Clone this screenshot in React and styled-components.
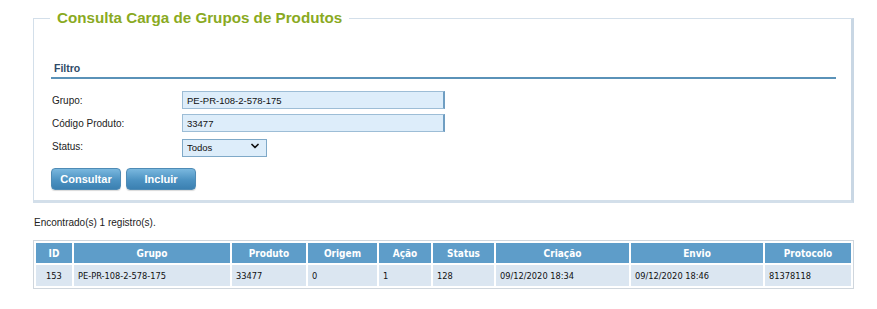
import React from "react";
import styled, { createGlobalStyle } from "styled-components";
import { ChevronDown } from "lucide-react";

const GlobalStyle = createGlobalStyle`
  body {
    margin: 0;
    background: #ffffff;
    font-family: "Liberation Sans", Arial, sans-serif;
    color: #222;
  }
`;

const rows = [
  {
    id: "153",
    grupo: "PE-PR-108-2-578-175",
    produto: "33477",
    origem: "0",
    acao: "1",
    status: "128",
    criacao: "09/12/2020 18:34",
    envio: "09/12/2020 18:46",
    protocolo: "81378118",
  },
];

const columns = [
  { key: "id", title: "ID", width: 36, center: true },
  { key: "grupo", title: "Grupo", width: 156 },
  { key: "produto", title: "Produto", width: 74 },
  { key: "origem", title: "Origem", width: 69 },
  { key: "acao", title: "Ação", width: 52 },
  { key: "status", title: "Status", width: 61 },
  { key: "criacao", title: "Criação", width: 133 },
  { key: "envio", title: "Envio", width: 132 },
  { key: "protocolo", title: "Protocolo" },
];

export default function App() {
  return (
    <>
      <GlobalStyle />
      <Page>
        <Panel>
          <Title>Consulta Carga de Grupos de Produtos</Title>
          <SectionHeader>Filtro</SectionHeader>
          <Form>
            <Label>Grupo:</Label>
            <TextInput defaultValue="PE-PR-108-2-578-175" />
            <Label>Código Produto:</Label>
            <TextInput defaultValue="33477" />
            <Label>Status:</Label>
            <SelectWrap>
              <Select defaultValue="Todos">
                <option>Todos</option>
              </Select>
              <Chevron size={12} strokeWidth={3.5} />
            </SelectWrap>
          </Form>
          <Buttons>
            <Button>Consultar</Button>
            <Button>Incluir</Button>
          </Buttons>
        </Panel>

        <Found>Encontrado(s) 1 registro(s).</Found>

        <Table>
          <colgroup>
            {columns.map((c) => (
              <col key={c.key} style={c.width ? { width: c.width } : undefined} />
            ))}
          </colgroup>
          <thead>
            <tr>
              {columns.map((c) => (
                <Th key={c.key}>{c.title}</Th>
              ))}
            </tr>
          </thead>
          <tbody>
            {rows.map((r) => (
              <tr key={r.id}>
                {columns.map((c) => (
                  <Td key={c.key} $center={c.center}>
                    {r[c.key]}
                  </Td>
                ))}
              </tr>
            ))}
          </tbody>
        </Table>
      </Page>
    </>
  );
}

const Page = styled.div`
  width: 821px;
  padding: 9px 0 20px 33px;
`;

const Panel = styled.fieldset`
  margin: 0;
  padding: 0 15px 10px 17px;
  border: 1px solid #d3dfea;
  border-right: 3px solid #c9d7e4;
  border-bottom: 3px solid #d3dfea;
  background: #ffffff;
  min-width: 0;
`;

const Title = styled.legend`
  margin-left: -1px;
  padding: 0 7px;
  font-size: 15.2px;
  line-height: 18px;
  font-weight: bold;
  color: #8aaa1f;
`;

const SectionHeader = styled.div`
  margin-top: 35px;
  padding: 0 0 2px 3px;
  font-size: 10.5px;
  line-height: 13px;
  font-weight: bold;
  color: #2f4b68;
  border-bottom: 2px solid #5a92b8;
`;

const Form = styled.div`
  display: grid;
  grid-template-columns: 131px 263px;
  grid-auto-rows: 18px;
  row-gap: 5px;
  margin-top: 12px;
  align-items: center;
`;

const Label = styled.label`
  font-size: 10px;
  color: #222;
  padding-left: 1px;
`;

const TextInput = styled.input`
  box-sizing: border-box;
  width: 263px;
  height: 18px;
  margin: 0;
  padding: 0 4px;
  font-family: "Liberation Sans", Arial, sans-serif;
  font-size: 9.5px;
  color: #111;
  background: #ddedfa;
  border: 1px solid #9dbdd6;
  border-right: 2px solid #6f9ec2;
  outline: none;
`;

const SelectWrap = styled.div`
  position: relative;
  width: 85px;
  height: 18px;
`;

const Select = styled.select`
  box-sizing: border-box;
  appearance: none;
  width: 85px;
  height: 18px;
  margin: 0;
  padding: 0 4px;
  font-family: "Liberation Sans", Arial, sans-serif;
  font-size: 9.5px;
  color: #111;
  background: #ddedfa;
  border: 1px solid #7fa9c8;
  border-radius: 0;
  outline: none;
`;

const Chevron = styled(ChevronDown)`
  position: absolute;
  right: 6px;
  top: 3px;
  color: #111;
  pointer-events: none;
`;

const Buttons = styled.div`
  display: flex;
  gap: 5px;
  margin-top: 13px;
`;

const Button = styled.button`
  box-sizing: border-box;
  width: 70px;
  height: 22px;
  padding: 0;
  font-family: "Liberation Sans", Arial, sans-serif;
  font-size: 11px;
  font-weight: bold;
  color: #ffffff;
  background: linear-gradient(#7ab8de, #4c92c2 55%, #3b80b1);
  border: 1px solid #4f8bb5;
  border-radius: 4px;
  box-shadow: 0 1px 1px rgba(0, 0, 0, 0.15);
`;

const Found = styled.div`
  margin: 14px 0 0 1px;
  font-size: 10px;
  line-height: 12px;
  color: #222;
`;

const Table = styled.table`
  box-sizing: border-box;
  width: 821px;
  margin-top: 11px;
  border-collapse: separate;
  border-spacing: 2px;
  border: 1px solid #cfd6dd;
  padding: 0;
  font-family: "DejaVu Sans Condensed", "Liberation Sans", sans-serif;
  table-layout: fixed;
`;

const Th = styled.th`
  height: 20px;
  padding: 0;
  background: #5e9dc9;
  color: #ffffff;
  font-size: 10px;
  font-weight: bold;
  text-align: center;
`;

const Td = styled.td`
  height: 21px;
  padding: 0 4px;
  background: #dbe6f1;
  color: #111;
  font-size: 9.2px;
  text-align: ${(p) => (p.$center ? "center" : "left")};
  white-space: nowrap;
`;
